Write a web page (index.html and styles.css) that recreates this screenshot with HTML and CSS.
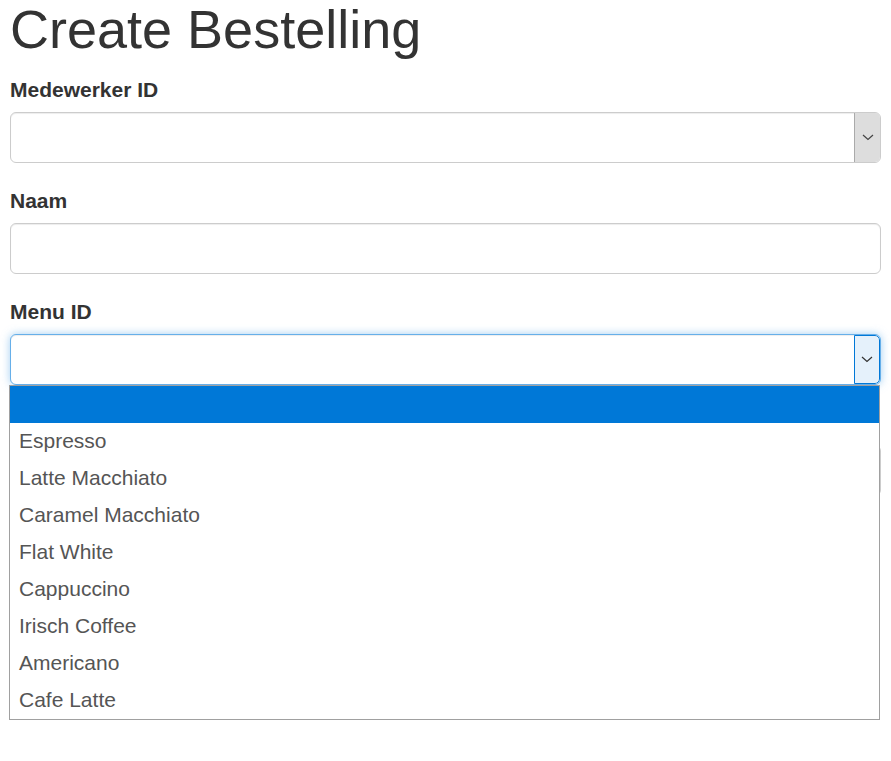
FILE: index.html
```html
<!DOCTYPE html>
<html>
<head>
<meta charset="utf-8">
<link rel="stylesheet" href="styles.css">
</head>
<body>
<div class="page">
  <h1 class="title">Create Bestelling</h1>
  <form class="form">
    <div class="form-group">
      <label class="label">Medewerker ID</label>
      <div class="select">
        <span class="select-btn"><svg width="12" height="7" viewBox="0 0 12 7"><path d="M1 1 L6 5.5 L11 1" fill="none" stroke="#444" stroke-width="1.2"/></svg></span>
      </div>
    </div>
    <div class="form-group">
      <label class="label">Naam</label>
      <div class="input"></div>
    </div>
    <div class="form-group menu-group">
      <label class="label">Menu ID</label>
      <div class="select select-focus">
        <span class="select-btn"><svg width="12" height="7" viewBox="0 0 12 7"><path d="M1 1 L6 5.5 L11 1" fill="none" stroke="#333" stroke-width="1.2"/></svg></span>
      </div>
      <ul class="dropdown">
        <li class="opt opt-active">&nbsp;</li>
        <li class="opt">Espresso</li>
        <li class="opt">Latte Macchiato</li>
        <li class="opt">Caramel Macchiato</li>
        <li class="opt">Flat White</li>
        <li class="opt">Cappuccino</li>
        <li class="opt">Irisch Coffee</li>
        <li class="opt">Americano</li>
        <li class="opt">Cafe Latte</li>
      </ul>
    </div>
    <div class="form-group">
      <div class="label-space"></div>
      <div class="input"></div>
    </div>
  </form>
</div>
</body>
</html>
```
FILE: styles.css
```css
html, body {
  margin: 0;
  padding: 0;
  background: #fff;
}
html {
  min-height: 761px;
}
body {
  min-height: 761px;
  font-family: "Liberation Sans", Arial, sans-serif;
  color: #333;
}
.page {
  padding: 0 10px;
}
.title {
  margin: 0 0 15px 0;
  font-size: 54px;
  line-height: 59.4px;
  font-weight: 400;
  color: #333;
}
.form {
  display: flex;
  flex-direction: column;
}
.form-group {
  display: flex;
  flex-direction: column;
  margin-bottom: 22.5px;
}
.menu-group {
  position: relative;
}
.label {
  display: block;
  font-size: 21px;
  line-height: 30px;
  padding-top: 1px;
  font-weight: 700;
  margin-bottom: 6.5px;
}
.label-space {
  height: 37.5px;
}
.input, .select {
  box-sizing: border-box;
  height: 51px;
  width: 100%;
  border: 1px solid #ccc;
  border-radius: 6px;
  background: #fff;
  box-shadow: inset 0 1px 1px rgba(0,0,0,.075);
}
.select {
  display: flex;
  justify-content: flex-end;
  overflow: hidden;
}
.select-btn {
  box-sizing: border-box;
  width: 26px;
  height: 100%;
  background: #ddd;
  border-left: 1px solid #aaa;
  display: flex;
  align-items: center;
  justify-content: center;
}
.select-focus {
  border-color: #66afe9;
  box-shadow: inset 0 1px 1px rgba(0,0,0,.075), 0 0 8px rgba(102,175,233,.6);
}
.select-focus .select-btn {
  background: #e5f1fb;
  border: 1px solid #0078d7;
  border-radius: 0 5px 5px 0;
}
.dropdown {
  position: absolute;
  left: -1px;
  right: 1px;
  top: 88.5px;
  margin: 0;
  padding: 0;
  list-style: none;
  background: #fff;
  border: 1px solid #a0a0a0;
  z-index: 5;
}
.opt {
  height: 37px;
  line-height: 36px;
  padding-left: 9px;
  font-size: 21px;
  color: #555;
}
.opt-active {
  background: #0078d7;
  color: #fff;
}
```
